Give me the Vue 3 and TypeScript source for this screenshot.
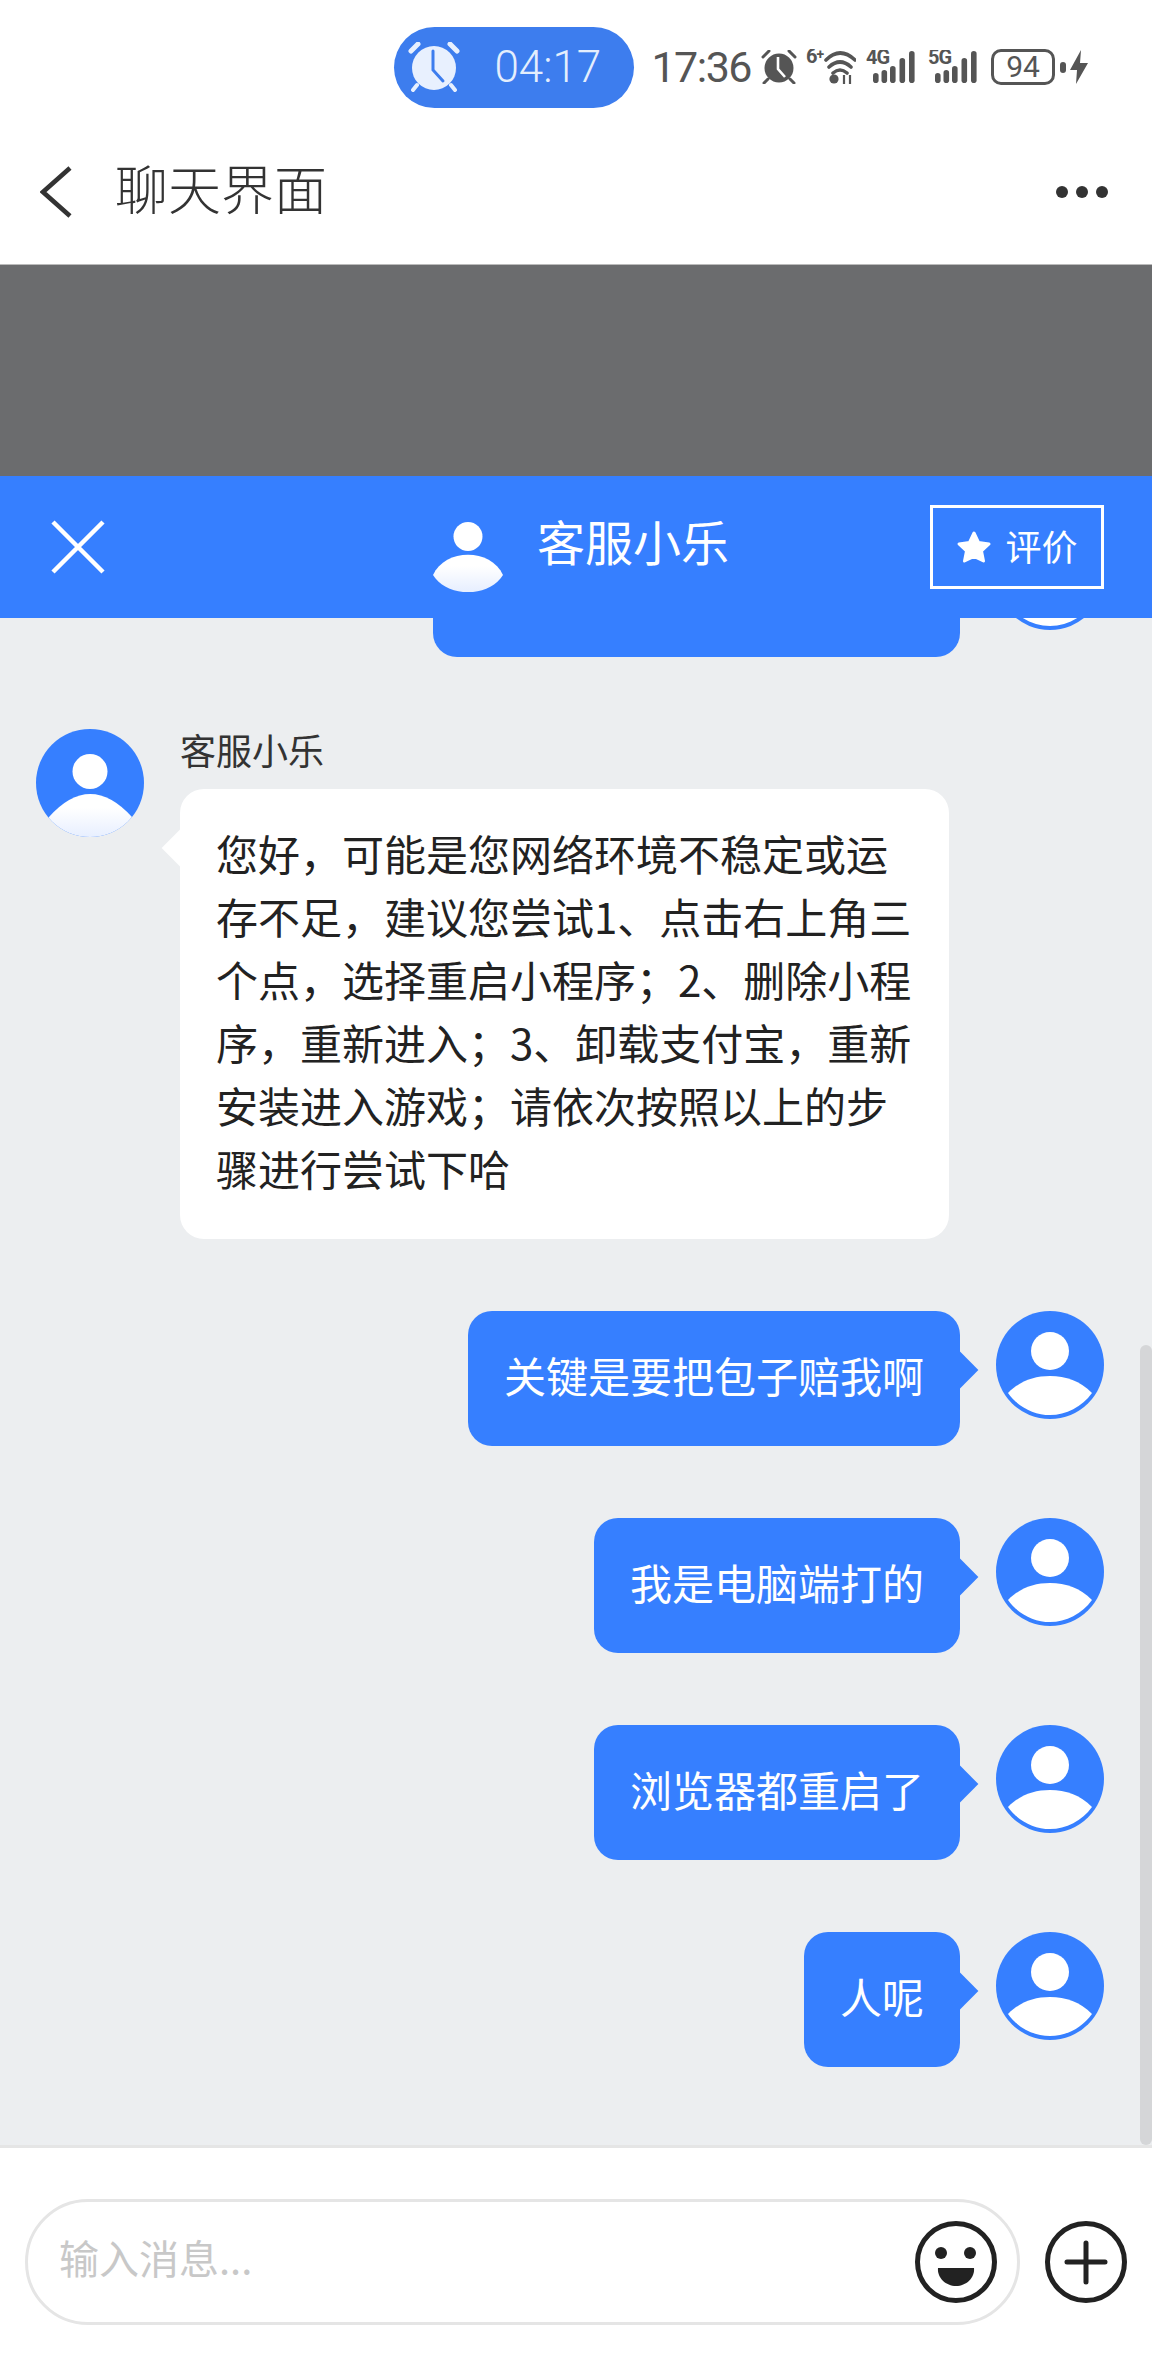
<script setup lang="ts">
import { ref } from 'vue'

const replies = ref([
  { id: 1, text: '关键是要把包子赔我啊' },
  { id: 2, text: '我是电脑端打的' },
  { id: 3, text: '浏览器都重启了' },
  { id: 4, text: '人呢' }
])

const answer = '您好，可能是您网络环境不稳定或运存不足，建议您尝试1、点击右上角三个点，选择重启小程序；2、删除小程序，重新进入；3、卸载支付宝，重新安装进入游戏；请依次按照以上的步骤进行尝试下哈'

const signals = ref(['4G', '5G'])
const bars = [
  { x: 7, y: 23, h: 10 },
  { x: 15.5, y: 20, h: 13 },
  { x: 24, y: 16, h: 17 },
  { x: 33.5, y: 8, h: 25 },
  { x: 43, y: 1, h: 32 }
]
</script>

<template>
  <div class="page">
    <div class="status">
      <div class="pill">
        <svg class="pill-clock" viewBox="0 0 54 50" width="54" height="50">
          <path d="M4 9 L11 2 M50 9 L43 2" stroke="#e8f0fe" stroke-width="5" stroke-linecap="round" />
          <path d="M10 43 L6 48 M44 43 L48 48" stroke="#e8f0fe" stroke-width="4" stroke-linecap="round" />
          <circle cx="27" cy="26" r="22" fill="#e8f0fe" />
          <path d="M26 9 V28 L36 39" fill="none" stroke="#3d7dee" stroke-width="3" stroke-linecap="round" />
        </svg>
        <span class="pill-time">04:17</span>
      </div>
      <span class="clock">17:36</span>
      <svg class="ic-alarm" viewBox="0 0 36 34" width="36" height="34">
        <path d="M2 7 L8 1 M34 7 L28 1 M7 29 L3 33 M29 29 L33 33" stroke="#555" stroke-width="3" stroke-linecap="round" />
        <circle cx="18" cy="18" r="14.5" fill="#555" />
        <path d="M17 7 V19 L24 27" fill="none" stroke="#fff" stroke-width="2.6" />
      </svg>
      <svg class="ic-wifi" viewBox="0 0 50 36" width="50" height="36">
        <text x="0" y="14" class="tiny">6<tspan class="tiny-plus" dy="-4">+</tspan></text>
        <path d="M20 11 Q34 -3 49 11 M23 18 Q34 8 45 18 M27 24 Q34 18 41 24" fill="none" stroke="#555" stroke-width="3.6" stroke-linecap="round" />
        <circle cx="28" cy="30" r="4.6" fill="#555" />
        <path d="M38 26 V35 M44 26 V35" stroke="#555" stroke-width="2.2" />
      </svg>
      <svg v-for="s in signals" :key="s" class="ic-signal" viewBox="0 0 50 34" width="50" height="34">
        <text x="0" y="14" class="tiny">{{ s }}</text>
        <rect v-for="b in bars" :key="b.x" :x="b.x" :y="b.y" width="5.6" :height="b.h" rx="2.8" fill="#555" />
      </svg>
      <div class="battery">94</div>
      <span class="nub"></span>
      <svg class="ic-bolt" viewBox="0 0 18 34" width="18" height="34">
        <path d="M11 0 L0 20 H7 L6 34 L18 13 H10 Z" fill="#555" />
      </svg>
    </div>

    <div class="nav">
      <svg class="back" viewBox="0 0 32 52" width="32" height="52">
        <path d="M30 2 L3 26 L30 50" fill="none" stroke="#333" stroke-width="4.6" />
      </svg>
      <span class="nav-title">聊天界面</span>
      <svg class="more" viewBox="0 0 52 12" width="52" height="12">
        <circle cx="6" cy="6" r="6" fill="#333" />
        <circle cx="26" cy="6" r="6" fill="#333" />
        <circle cx="46" cy="6" r="6" fill="#333" />
      </svg>
    </div>

    <div class="dim"></div>

    <div class="head">
      <svg class="close" viewBox="0 0 54 54" width="54" height="54">
        <path d="M2 2 L52 52 M52 2 L2 52" stroke="#fff" stroke-width="4.5" />
      </svg>
      <div class="agent">
        <svg viewBox="0 0 70 70" width="70" height="70">
          <defs>
            <linearGradient id="gh" x1="0" y1="0" x2="0" y2="1">
              <stop offset="0.3" stop-color="#fff" />
              <stop offset="1" stop-color="#e6eeff" />
            </linearGradient>
          </defs>
          <ellipse cx="35" cy="14.5" rx="14.5" ry="14.5" fill="#fff" />
          <path d="M0 53 C12 26 58 26 70 53 C56 76 14 76 0 53 Z" fill="url(#gh)" />
        </svg>
        <span class="agent-name">客服小乐</span>
      </div>
      <div class="rate">
        <svg viewBox="0 0 36 34" width="36" height="34">
          <path d="M18 3 L22.5 12.5 L33 14 L25.5 21 L27.5 31 L18 26.5 L8.5 31 L10.5 21 L3 14 L13.5 12.5 Z" fill="#fff" stroke="#fff" stroke-width="3" stroke-linejoin="round" />
        </svg>
        <span class="rate-text">评价</span>
      </div>
    </div>

    <div class="chat">
      <div class="row row-me row-cut">
        <div class="bubble bubble-me bubble-cut"></div>
        <svg class="avatar" viewBox="0 0 108 108" width="108" height="108">
          <circle cx="54" cy="54" r="54" fill="#367fff" />
          <circle cx="54" cy="40" r="19" fill="#fff" />
          <path d="M12 82 C24 70 38 65 54 65 C70 65 84 70 96 82 C86 96 70 104 54 104 C38 104 22 96 12 82 Z" fill="#fff" />
        </svg>
      </div>

      <div class="row row-agent">
        <svg class="avatar avatar-agent" viewBox="0 0 108 108" width="108" height="108">
          <defs>
            <linearGradient id="ga" x1="0" y1="0" x2="0" y2="1">
              <stop offset="0.3" stop-color="#fff" />
              <stop offset="1" stop-color="#e6eeff" />
            </linearGradient>
          </defs>
          <rect width="108" height="108" fill="#367fff" />
          <circle cx="54" cy="42.5" r="17.5" fill="#fff" />
          <path d="M13 88 Q54 42 96 88 L110 110 L-2 110 Z" fill="url(#ga)" />
        </svg>
        <div class="agent-col">
          <div class="sender">客服小乐</div>
          <div class="bubble bubble-agent">{{ answer }}</div>
        </div>
      </div>

      <div v-for="m in replies" :key="m.id" class="row row-me">
        <div class="bubble bubble-me">{{ m.text }}</div>
        <svg class="avatar" viewBox="0 0 108 108" width="108" height="108">
          <circle cx="54" cy="54" r="54" fill="#367fff" />
          <circle cx="54" cy="40" r="19" fill="#fff" />
          <path d="M12 82 C24 70 38 65 54 65 C70 65 84 70 96 82 C86 96 70 104 54 104 C38 104 22 96 12 82 Z" fill="#fff" />
        </svg>
      </div>

      <div class="scrollbar"></div>
    </div>

    <div class="input-bar">
      <div class="input">
        <span class="placeholder">输入消息...</span>
        <svg viewBox="0 0 84 84" width="84" height="84">
          <circle cx="42" cy="42" r="38.5" fill="none" stroke="#222" stroke-width="5" />
          <circle cx="27" cy="33" r="6" fill="#222" />
          <circle cx="56" cy="33" r="6" fill="#222" />
          <path d="M24 48 H60 C61 58 52 66 42 66 C32 66 23 58 24 48 Z" fill="#222" />
        </svg>
      </div>
      <svg class="plus" viewBox="0 0 84 84" width="84" height="84">
        <circle cx="42" cy="42" r="38.5" fill="none" stroke="#222" stroke-width="5" />
        <path d="M23 42 H61 M42 23 V62" stroke="#222" stroke-width="5" stroke-linecap="round" />
      </svg>
    </div>
  </div>
</template>

<style scoped>
.page {
  height: 2376px;
  display: flex;
  flex-direction: column;
  overflow: hidden;
  background: #fff;
  font-family: "Noto Sans CJK SC", "Noto Sans", sans-serif;
}

/* status bar */
.status {
  height: 134px;
  flex: none;
  display: flex;
  align-items: center;
  padding-right: 64px;
  justify-content: flex-end;
  color: #555;
  font-family: Roboto, sans-serif;
}
.pill {
  width: 240px;
  height: 81px;
  border-radius: 41px;
  background: #3d7dee;
  display: flex;
  align-items: center;
  padding-left: 13px;
  box-sizing: border-box;
  margin-right: 17px;
}
.pill-time {
  margin-left: 33px;
  font-size: 44px;
  font-weight: 300;
  color: #e4eefd;
}
.clock {
  font-size: 43px;
  letter-spacing: -1.5px;
  margin-right: 10px;
}
.ic-alarm {
  margin-right: 9px;
}
.ic-wifi {
  margin-right: 10px;
}
.ic-signal {
  margin-right: 12px;
}
.tiny {
  font-family: Roboto, sans-serif;
  font-size: 20px;
  font-weight: 700;
  letter-spacing: -1px;
  fill: #555;
}
.tiny-plus {
  font-size: 14px;
}
.battery {
  width: 64px;
  height: 36px;
  box-sizing: border-box;
  border: 3px solid #555;
  border-radius: 10px;
  font-size: 30px;
  line-height: 30px;
  text-align: center;
  margin-left: 1px;
}
.nub {
  width: 6px;
  height: 11px;
  border-radius: 3px;
  background: #555;
  margin: 0 4px 0 5px;
}

/* page nav */
.nav {
  height: 131px;
  flex: none;
  display: flex;
  align-items: center;
  box-sizing: border-box;
  padding: 0 44px 14px 40px;
  border-bottom: 1px solid #bbb;
}
.back {
  flex: none;
}
.nav-title {
  margin: -10px 0 0 43px;
  font-size: 53px;
  font-weight: 300;
  color: #333;
  flex: 1;
}
.dim {
  height: 211px;
  flex: none;
  background: #6b6c6e;
}

/* chat header */
.head {
  height: 142px;
  flex: none;
  background: #367fff;
  display: flex;
  align-items: center;
  padding: 0 48px 0 51px;
  color: #fff;
  position: relative;
  z-index: 1;
}
.close {
  flex: none;
}
.agent {
  margin-left: 328px;
  display: flex;
  align-items: center;
  gap: 34px;
}
.agent svg {
  margin-top: 20px;
}
.agent-name {
  font-size: 48px;
  line-height: 60px;
  margin-top: -14px;
}
.rate {
  margin-left: auto;
  width: 174px;
  height: 84px;
  box-sizing: border-box;
  border: 3px solid #fff;
  display: flex;
  align-items: center;
  justify-content: center;
  gap: 13px;
  font-size: 36px;
}
.rate-text {
  margin-top: -5px;
}

/* messages */
.chat {
  flex: 1;
  min-height: 0;
  position: relative;
  overflow: hidden;
  background: #eceef0;
  padding: 0 48px 0 36px;
  display: flex;
  flex-direction: column;
  gap: 72px;
}
.row {
  display: flex;
  flex: none;
}
.row-me {
  justify-content: flex-end;
  gap: 36px;
}
.row-cut {
  margin-top: -96px;
}
.row-agent {
  gap: 36px;
}
.avatar {
  flex: none;
}
.avatar-agent {
  border-radius: 50%;
}
.agent-col {
  width: 769px;
}
.sender {
  height: 60px;
  line-height: 40px;
  font-size: 36px;
  color: #333;
}
.bubble {
  position: relative;
  box-sizing: border-box;
  padding: 32px 36px 40px;
  border-radius: 24px;
  font-size: 42px;
  line-height: 63px;
}
.bubble::after {
  content: "";
  position: absolute;
  top: 46px;
  width: 26px;
  height: 26px;
  transform: rotate(45deg);
  background: inherit;
}
.bubble-me {
  background: #367fff;
  color: #fff;
}
.bubble-me::after {
  right: -13px;
}
.bubble-cut {
  width: 527px;
  height: 135px;
}
.bubble-agent {
  background: #fff;
  color: #222;
}
.bubble-agent::after {
  left: -13px;
}
.scrollbar {
  position: absolute;
  right: 0;
  top: 727px;
  width: 12px;
  height: 800px;
  border-radius: 6px;
  background: #d5d6d8;
}

/* input */
.input-bar {
  height: 231px;
  flex: none;
  box-sizing: border-box;
  border-top: 3px solid #e5e5e5;
  display: flex;
  align-items: flex-start;
  padding: 51px 24px 0 25px;
  background: #fff;
}
.input {
  width: 995px;
  height: 126px;
  box-sizing: border-box;
  border: 3px solid #e5e5e5;
  border-radius: 63px;
  display: flex;
  align-items: center;
  justify-content: space-between;
  padding: 0 19px 0 31px;
}
.placeholder {
  font-size: 40px;
  color: #c8c8c8;
  margin-top: -10px;
}
.plus {
  margin: 21px 0 0 24px;
  flex: none;
}
</style>
